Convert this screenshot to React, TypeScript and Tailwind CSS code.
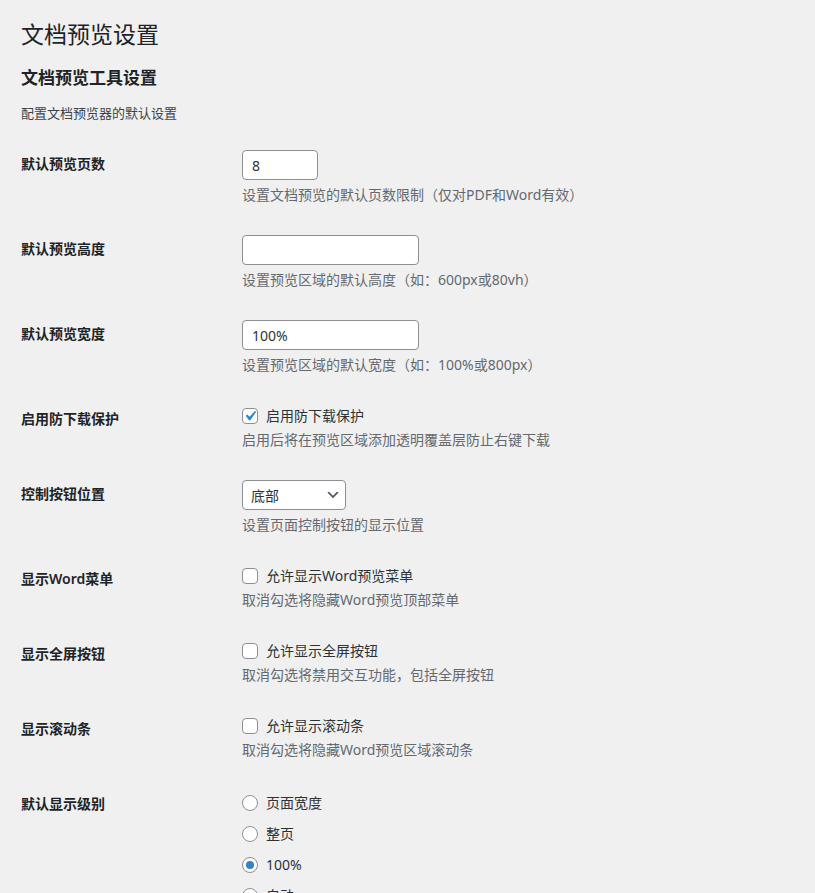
import React from 'react';

const Row: React.FC<{ label: string; children: React.ReactNode }> = ({ label, children }) => (
  <div className="flex">
    <div className="w-[221px] shrink-0 pt-[20px] pb-[20px] text-[14px] leading-[17px] font-semibold text-[#1d2327]">
      {label}
    </div>
    <div className="flex-1 py-[15px] text-[14px] text-[#3c434a]">{children}</div>
  </div>
);

const Desc: React.FC<{ children: React.ReactNode; tall?: boolean }> = ({ children, tall }) => (
  <p className={`${tall ? 'mt-[5px]' : 'mt-[4px]'} text-[14px] leading-[20px] text-[#646970]`}>{children}</p>
);

const Checkbox: React.FC<{ checked?: boolean; label: string }> = ({ checked, label }) => (
  <label className="flex h-[21px] items-center gap-[8px] leading-[21px]">
    <span className="flex h-[16px] w-[16px] items-center justify-center rounded-[4px] border border-[#8c8f94] bg-white">
      {checked && (
        <svg viewBox="0 0 20 20" className="h-[20px] w-[20px] shrink-0">
          <path d="M14.83 4.89l1.34.94-5.81 8.38H9.02L5.78 9.67l1.34-1.25 2.57 2.4z" fill="#3582c4" />
        </svg>
      )}
    </span>
    <span className="text-[#2c3338]">{label}</span>
  </label>
);

const Radio: React.FC<{ checked?: boolean; label: string }> = ({ checked, label }) => (
  <label className="flex h-[22px] items-center gap-[8px] leading-[22px]">
    <span className="flex h-[16px] w-[16px] items-center justify-center rounded-full border border-[#8c8f94] bg-white">
      {checked && <span className="h-[8px] w-[8px] rounded-full bg-[#3582c4]" />}
    </span>
    <span className="text-[#2c3338]">{label}</span>
  </label>
);

const TextInput: React.FC<{ value: string; width: string }> = ({ value, width }) => (
  <input
    readOnly
    defaultValue={value}
    className={`${width} block h-[30px] rounded-[4px] border border-[#8c8f94] bg-white px-[9px] text-[14px] text-[#2c3338] outline-none`}
  />
);

export default function App() {
  return (
    <div className="min-h-screen bg-[#f0f0f1] pl-[21px] pr-5 pb-10 font-['Noto_Sans','Noto_Sans_CJK_SC',sans-serif] text-[#3c434a]">
      <h1 className="pt-[19px] text-[23px] font-normal leading-[30px] text-[#1d2327]">文档预览设置</h1>
      <h2 className="mt-[18px] text-[17px] font-semibold leading-[22px] text-[#1d2327]">文档预览工具设置</h2>
      <p className="mt-[14px] text-[13px] leading-[20px] text-[#3c434a]">配置文档预览器的默认设置</p>

      <div className="mt-[12px]">
        <Row label="默认预览页数">
          <TextInput value="8" width="w-[76px]" />
          <Desc tall>设置文档预览的默认页数限制（仅对PDF和Word有效）</Desc>
        </Row>

        <Row label="默认预览高度">
          <TextInput value="" width="w-[177px]" />
          <Desc tall>设置预览区域的默认高度（如：600px或80vh）</Desc>
        </Row>

        <Row label="默认预览宽度">
          <TextInput value="100%" width="w-[177px]" />
          <Desc tall>设置预览区域的默认宽度（如：100%或800px）</Desc>
        </Row>

        <Row label="启用防下载保护">
          <Checkbox checked label="启用防下载保护" />
          <Desc>启用后将在预览区域添加透明覆盖层防止右键下载</Desc>
        </Row>

        <Row label="控制按钮位置">
          <div className="relative w-[104px]">
            <select
              defaultValue="bottom"
              className="block h-[30px] w-full appearance-none rounded-[4px] border border-[#8c8f94] bg-white pl-[8px] pr-[24px] text-[14px] text-[#2c3338] outline-none"
            >
              <option value="bottom">底部</option>
              <option value="top">顶部</option>
            </select>
            <svg viewBox="0 0 20 20" className="pointer-events-none absolute right-[5px] top-[7px] h-[16px] w-[16px]">
              <path d="M5 6l5 5 5-5 2 1-7 7-7-7 2-1z" fill="#50575e" />
            </svg>
          </div>
          <Desc tall>设置页面控制按钮的显示位置</Desc>
        </Row>

        <Row label="显示Word菜单">
          <Checkbox label="允许显示Word预览菜单" />
          <Desc>取消勾选将隐藏Word预览顶部菜单</Desc>
        </Row>

        <Row label="显示全屏按钮">
          <Checkbox label="允许显示全屏按钮" />
          <Desc>取消勾选将禁用交互功能，包括全屏按钮</Desc>
        </Row>

        <Row label="显示滚动条">
          <Checkbox label="允许显示滚动条" />
          <Desc>取消勾选将隐藏Word预览区域滚动条</Desc>
        </Row>

        <Row label="默认显示级别">
          <div className="mt-[2px] flex flex-col gap-[9px]">
            <Radio label="页面宽度" />
            <Radio label="整页" />
            <Radio checked label="100%" />
            <Radio label="自动" />
          </div>
        </Row>
      </div>
    </div>
  );
}
